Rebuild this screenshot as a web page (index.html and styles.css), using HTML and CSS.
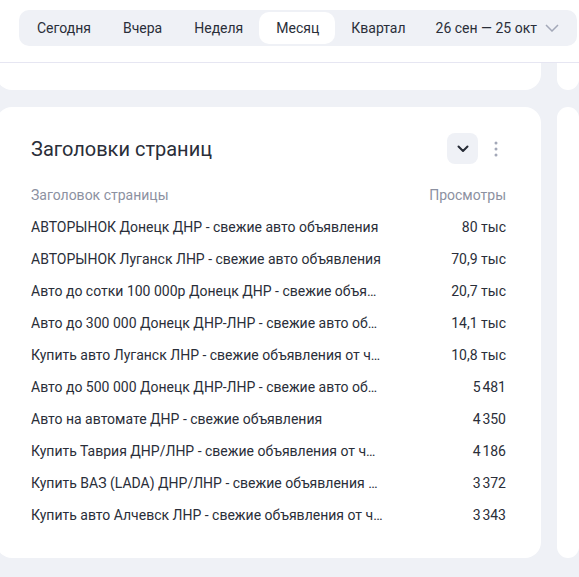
FILE: index.html
```html
<!DOCTYPE html>
<html lang="ru">
<head>
    <meta charset="UTF-8">
    <title>Заголовки страниц</title>
    <link rel="stylesheet" href="styles.css">
</head>
<body>
<div class="header">
    <div class="periods">
        <div class="period">Сегодня</div>
        <div class="period">Вчера</div>
        <div class="period">Неделя</div>
        <div class="period active">Месяц</div>
        <div class="period">Квартал</div>
        <div class="period range"><span>26 сен — 25 окт</span><svg width="14" height="8" viewBox="0 0 14 8"><path d="M1 1l6 6 6-6" fill="none" stroke="#a3a8b8" stroke-width="1.5"/></svg></div>
    </div>
</div>
<div class="board">
    <div class="card card-prev"></div>
    <div class="card card-side-prev"></div>
    <div class="card widget">
        <div class="widget-head">
            <h2>Заголовки страниц</h2>
            <div class="tools">
                <div class="btn-collapse">
                    <svg width="12" height="8" viewBox="0 0 12 8"><path d="M1.5 1.5l4.5 4.5 4.5-4.5" fill="none" stroke="#262b36" stroke-width="2" stroke-linecap="round" stroke-linejoin="round"/></svg>
                </div>
                <div class="btn-more">
                    <svg width="4" height="16" viewBox="0 0 4 16"><circle cx="2" cy="2" r="1.5" fill="#a3a8b8"/><circle cx="2" cy="8" r="1.5" fill="#a3a8b8"/><circle cx="2" cy="14" r="1.5" fill="#a3a8b8"/></svg>
                </div>
            </div>
        </div>
        <div class="table">
            <div class="row head">
                <div class="name">Заголовок страницы</div>
                <div class="value">Просмотры</div>
            </div>
            <div class="row"><div class="name">АВТОРЫНОК Донецк ДНР - свежие авто объявления</div><div class="value">80 тыс</div></div>
            <div class="row"><div class="name">АВТОРЫНОК Луганск ЛНР - свежие авто объявления</div><div class="value">70,9 тыс</div></div>
            <div class="row"><div class="name">Авто до сотки 100 000р Донецк ДНР - свежие объявления от частников</div><div class="value">20,7 тыс</div></div>
            <div class="row"><div class="name">Авто до 300 000 Донецк ДНР-ЛНР - свежие авто объявления</div><div class="value">14,1 тыс</div></div>
            <div class="row"><div class="name">Купить авто Луганск ЛНР - свежие объявления от частников</div><div class="value">10,8 тыс</div></div>
            <div class="row"><div class="name">Авто до 500 000 Донецк ДНР-ЛНР - свежие авто объявления</div><div class="value">5&#8239;481</div></div>
            <div class="row"><div class="name">Авто на автомате ДНР - свежие объявления</div><div class="value">4&#8239;350</div></div>
            <div class="row"><div class="name">Купить Таврия ДНР/ЛНР - свежие объявления от частников</div><div class="value">4&#8239;186</div></div>
            <div class="row"><div class="name">Купить ВАЗ (LADA) ДНР/ЛНР - свежие объявления от частников</div><div class="value">3&#8239;372</div></div>
            <div class="row"><div class="name">Купить авто Алчевск ЛНР - свежие объявления от частников</div><div class="value">3&#8239;343</div></div>
        </div>
    </div>
    <div class="card card-side"></div>
</div>
</body>
</html>
```

FILE: styles.css
```css
html {
    box-sizing: border-box;
    font-family: Roboto, "Noto Sans", sans-serif;
    font-size: 14px;
    color: #2a2e39;
}

*,
*:before,
*:after {
    box-sizing: inherit;
}

body {
    margin: 0;
    background: #eff1f6;
    overflow: hidden;
}

.header {
    background: #fff;
    height: 63px;
    border-bottom: 1px solid #e6e6f2;
    padding: 10px 0 0 19px;
}

.periods {
    display: flex;
    align-items: center;
    width: 558px;
    height: 36px;
    padding: 0 2px;
    background: #eff1f6;
    border-radius: 10px;
}

.period {
    display: flex;
    align-items: center;
    height: 32px;
    padding: 0 16px;
    border-radius: 10px;
    white-space: nowrap;
}

.period.active {
    background: #fff;
    padding: 0 16px 0 17px;
}

.period.range {
    gap: 8px;
    padding: 0 0 0 14px;
}

.board {
    display: grid;
    grid-template-columns: 545px 1fr;
    grid-template-rows: 27px 451px;
    column-gap: 16px;
    row-gap: 17px;
    margin-left: -4px;
}

.card {
    background: #fff;
    border-radius: 16px;
}

.card-prev,
.card-side-prev {
    border-radius: 0 0 16px 16px;
}

.widget {
    padding: 26px 35px 27px;
}

.widget-head {
    display: flex;
    align-items: center;
    justify-content: space-between;
    height: 31px;
    margin-bottom: 15px;
}

.widget-head h2 {
    margin: 0;
    font-size: 20px;
    font-weight: 400;
}

.tools {
    display: flex;
    align-items: center;
    gap: 16px;
    margin-right: 8px;
}

.btn-collapse {
    width: 31px;
    height: 31px;
    border-radius: 8px;
    background: #eff1f6;
    display: flex;
    align-items: center;
    justify-content: center;
}

.btn-more {
    display: flex;
    align-items: center;
}

.row {
    display: grid;
    grid-template-columns: 352px 1fr;
    height: 32px;
    align-items: center;
}

.row.head {
    color: #8c91a1;
}

.name {
    white-space: nowrap;
    overflow: hidden;
    text-overflow: ellipsis;
}

.value {
    text-align: right;
}
```
